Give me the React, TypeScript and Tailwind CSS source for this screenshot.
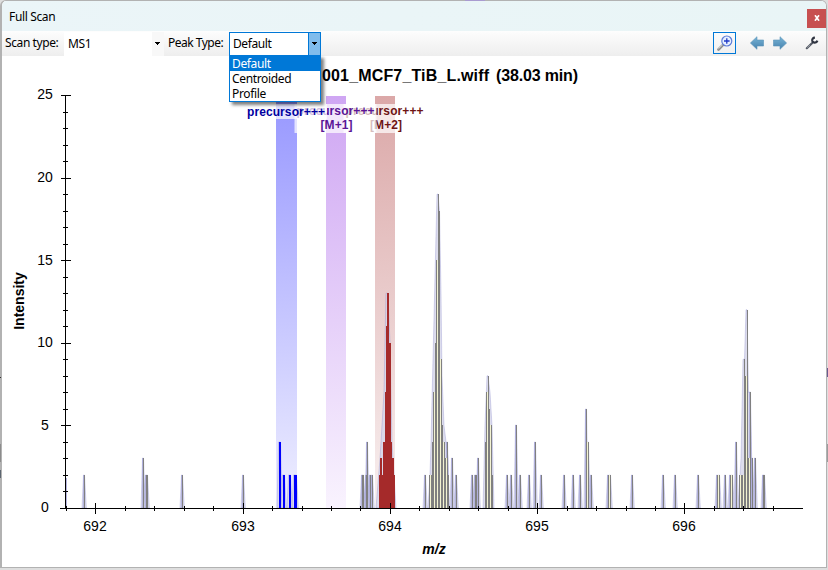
/**
 * FullScanWindow - spectrum viewer with scan and peak type selection
 */

import { useState } from 'react'

type Stick = [x: number, intensity: number, width?: number]

const BASE_Y = 508
const UNIT = 16.52

// Isolated peaks, drawn with a small profile outline behind them
const PEAKS: Stick[] = [
  [84, 2], [143, 3], [146, 2, 2], [182, 2], [243, 2],
  [362, 2, 2], [366, 2, 2], [367, 4], [370, 2], [372, 2],
  [425, 2], [447, 4], [452, 3], [456, 2],
  [472, 2], [475, 2, 2], [478, 3],
  [507, 2], [511, 2], [516, 5], [520, 2], [529, 2], [535, 4], [541, 2],
  [564, 2], [573, 2], [580, 2], [586, 6], [588, 4], [591, 2],
  [608, 2], [610, 2], [632, 2], [663, 2], [675, 2],
  [698, 2], [717, 2], [719, 2], [725, 2], [730, 2], [732, 2], [736, 4],
  [750, 7], [752, 3], [755, 3], [763, 2, 2],
]

// Dense groups, one column per pixel
const DENSE: Stick[] = [
  [429, 2], [431, 2], [432, 4], [433, 7], [435, 10], [436, 15], [438, 19],
  [439, 18], [441, 9], [442, 5], [444, 4], [445, 3], [447, 4], [448, 2],
  [485, 4], [486, 7], [488, 8], [489, 6], [491, 5], [492, 2],
  [739, 2], [741, 2], [742, 2], [744, 9], [745, 8], [747, 12], [748, 3], [750, 7],
]

const CREAM: Stick[] = [
  [430, 2], [434, 7], [437, 15], [440, 9], [443, 4], [446, 3],
  [487, 7], [490, 5], [587, 4], [609, 2], [718, 2], [731, 2], [740, 2], [743, 2], [746, 8], [749, 3],
]

const BLUE: Stick[] = [[279, 4, 2], [283, 2, 2], [289, 2, 2], [294, 2, 3]]

const RED: Stick[] = [
  [379, 2, 16], [380, 3, 2], [383, 4, 9], [385, 7, 6], [386, 11, 3],
  [387, 13, 2], [388, 10, 3], [391, 4], [392, 3, 2],
]

const ENVELOPES: [number, number][][] = [
  [[428, 0], [430, 2], [431, 4], [433, 9], [435, 14], [437, 19], [438, 19], [439.5, 18], [441, 13], [442, 8], [444, 5], [446, 4], [448, 3], [449, 0]],
  [[483, 0], [485, 5], [487, 8], [488, 8], [490, 7], [492, 5], [494, 0]],
  [[738, 0], [741, 3], [743, 9], [744.5, 9], [746, 12], [747, 12], [748.5, 7], [750, 7], [753, 0]],
  [[376, 0], [380, 3], [384, 7], [386, 13], [388, 13], [390, 10], [392, 4], [396, 0]],
]

const BANDS = [
  { x: 276, width: 21, fill: 'url(#band-blue)' },
  { x: 326, width: 20, fill: 'url(#band-violet)' },
  { x: 375, width: 20, fill: 'url(#band-red)' },
]

// Later entries overlay the earlier ones
const LABELS = [
  { cx: 384.5, color: '#6e1414', isotope: '[M+2]', isotopeX: 386 },
  { cx: 335.5, color: '#5a1496', isotope: '[M+1]', isotopeX: 336.5 },
  { cx: 286, color: '#0000a0' },
]

const X_MAJOR = [95, 243, 390, 537, 684]
const X_LABELS = ['692', '693', '694', '695', '696']
const X_MINOR = [66, 125, 154, 184, 213, 272, 302, 331, 360, 419, 449, 478, 508, 567, 596, 626, 655, 714, 743, 773]

function Sticks({ data, fill }: { data: Stick[]; fill: string }) {
  return (
    <g fill={fill} shapeRendering="crispEdges">
      {data.map(([x, v, w = 1], i) => (
        <rect key={i} x={x} y={Math.round(BASE_Y - v * UNIT)} width={w} height={Math.round(v * UNIT)} />
      ))}
    </g>
  )
}

function Gradient({ id, from, to }: { id: string; from: string; to: string }) {
  return (
    <linearGradient id={id} x1="0" y1="0" x2="0" y2="1">
      <stop offset="0" stopColor={from} />
      <stop offset="1" stopColor={to} />
    </linearGradient>
  )
}

function SpectrumChart() {
  return (
    <svg
      width="824"
      height="511"
      viewBox="2 56 824 511"
      className="block font-['Liberation_Sans',Arial,sans-serif]"
    >
      <defs>
        <Gradient id="band-blue" from="#9797ff" to="#efefff" />
        <Gradient id="band-violet" from="#cfa6f3" to="#f9f3fe" />
        <Gradient id="band-red" from="#dba8a8" to="#f8f0f0" />
      </defs>

      {BANDS.map((b) => (
        <rect key={b.x} x={b.x} y={96} width={b.width} height={412} fill={b.fill} />
      ))}

      {/* Profile outlines */}
      <g fill="#d5d5e9" fillOpacity="0.8" stroke="#8585c8" strokeOpacity="0.4" strokeWidth="0.8">
        {[...PEAKS, ...BLUE].map(([x, v, w = 1]) => {
          const top = Math.round(BASE_Y - v * UNIT)
          return <path key={x} d={`M${x - 2} 508L${x - 0.5} ${top}H${x + w - 0.5}L${x + w + 1.3} 508z`} />
        })}
        {ENVELOPES.map((pts, i) => (
          <polygon key={i} points={pts.map(([x, v]) => `${x},${BASE_Y - v * UNIT}`).join(' ')} />
        ))}
      </g>
      <rect x="66" y="478" width="1" height="30" fill="#b4b4df" />

      <g opacity="0.6">
        <Sticks data={PEAKS.map(([x, v]): Stick => [x - 1, v])} fill="#9c9cd4" />
      </g>
      <Sticks data={PEAKS} fill="#808080" />
      <Sticks data={CREAM} fill="#f3f3d2" />
      <Sticks data={DENSE} fill="#808080" />
      <Sticks data={BLUE} fill="#0000ff" />
      <Sticks data={RED} fill="#a52a2a" />

      {/* Axes */}
      <g fill="#000" shapeRendering="crispEdges">
        <rect x="65" y="95" width="1" height="414" />
        <rect x="60" y="508" width="743" height="1" />
        {Array.from({ length: 26 }, (_, i) => {
          const major = i % 5 === 0
          return (
            <rect key={i} x={major ? 61 : 63} y={Math.round(BASE_Y - i * UNIT)} width={major ? 10 : 5} height="1" />
          )
        })}
        {X_MAJOR.map((x) => <rect key={x} x={x} y="503" width="1" height="11" />)}
        {X_MINOR.map((x) => <rect key={x} x={x} y="506" width="1" height="5" />)}
      </g>
      <g fontSize="14" textAnchor="middle">
        {[0, 5, 10, 15, 20, 25].map((v) => (
          <text key={v} x="45" y={Math.round(BASE_Y - v * UNIT + 4.4)}>{v}</text>
        ))}
        {X_LABELS.map((label, i) => (
          <text key={label} x={X_MAJOR[i]} y="531">{label}</text>
        ))}
        <text x="434" y="554" fontWeight="bold" fontStyle="italic">m/z</text>
        <text transform="translate(24 301) rotate(-90)" fontWeight="bold">Intensity</text>
      </g>

      {LABELS.map(({ cx, color, isotope, isotopeX }) => (
        <g key={cx} fontSize="12" fontWeight="bold" textAnchor="middle" fill={color}>
          <rect x={cx - 41} y="104" width="82" height={isotope ? 29 : 15} fill="#fff" fillOpacity="0.72" />
          <text x={cx} y={isotope ? 115 : 116} textLength="78">precursor+++</text>
          {isotope && <text x={isotopeX} y="129" textLength="32">{isotope}</text>}
        </g>
      ))}

      <g fontSize="16" fontWeight="bold">
        <text x="322" y="81" textLength="167">001_MCF7_TiB_L.wiff</text>
        <text x="496" y="81" textLength="82">(38.03 min)</text>
      </g>
    </svg>
  )
}

function Caret() {
  return (
    <svg width="5" height="3" viewBox="0 0 5 3" shapeRendering="crispEdges">
      <path d="M0 0h5v1h-1v1h-1v1h-1v-1h-1v-1h-1z" />
    </svg>
  )
}

function NavArrow({ flip = false }: { flip?: boolean }) {
  return (
    <svg width="14" height="14" viewBox="0 0 14 14" className={flip ? '-scale-x-100' : ''}>
      <defs>
        <Gradient id="nav-arrow" from="#78b4d6" to="#4682ae" />
      </defs>
      <path d="M.4 7L7 .7V4h6.6v6H7v3.3z" fill="url(#nav-arrow)" stroke="#5b93b9" strokeWidth=".6" />
    </svg>
  )
}

const PEAK_TYPES = ['Default', 'Centroided', 'Profile']

export default function App() {
  const [peakType, setPeakType] = useState('Default')
  const [open, setOpen] = useState(true)

  return (
    <div className="relative w-[828px] h-[570px] bg-[#dedede] overflow-hidden font-['Noto_Sans','Open_Sans',sans-serif] text-xs text-black">
      <div className="w-[827px] h-[568px] flex flex-col rounded-t-md border-t border-l-2 border-r border-b border-[#b2b2b2] bg-white overflow-hidden">
        {/* Title bar */}
        <div className="h-[30px] shrink-0 flex items-center justify-between pl-[7px] bg-linear-to-r from-[#ebf5f8] to-[#e9f5f6]">
          <span className="pt-px tracking-[-0.35px]">Full Scan</span>
          <button className="w-[19px] h-[19px] mt-1 bg-[#c75050] flex items-center justify-center">
            <svg width="6" height="6" viewBox="0 0 6 6" stroke="#fff" strokeWidth="1.7">
              <path d="M1 .3L5 5.7M5 .3L1 5.7" />
            </svg>
          </button>
        </div>

        {/* Toolbar */}
        <div className="h-[25px] pt-px shrink-0 flex items-center bg-linear-to-b from-[#fdfdfd] to-[#eeeeee]">
          <span className="w-[62px] pl-[3px] pb-0.5 whitespace-nowrap tracking-[-0.4px]">Scan type:</span>
          <div className="w-[100px] h-6 flex bg-white">
            <span className="flex-1 pl-1 leading-6 tracking-[-0.4px]">MS1</span>
            <span className="w-3 pr-px pb-px flex items-center justify-center bg-[#f8f8f8]"><Caret /></span>
          </div>
          <span className="w-[63px] pl-1 pb-0.5 mr-0.5 whitespace-nowrap tracking-[-0.5px]">Peak Type:</span>
          <div className="relative w-[92px] h-6">
            <button
              onClick={() => setOpen(!open)}
              className="w-full h-6 flex border border-[#0078d7] bg-white text-left"
            >
              <span className="flex-1 pl-[3px] leading-[22px] tracking-[-0.4px]">{peakType}</span>
              <span className="w-3 h-full pb-px flex items-center justify-center border-l border-[#0078d7] bg-[#80bcec]"><Caret /></span>
            </button>
            {open && (
              <ul className="absolute z-10 top-[23px] left-0 w-[92px] border border-[#0078d7] bg-white shadow-[3px_3px_3px_rgba(0,0,0,0.5)]">
                {PEAK_TYPES.map((type) => (
                  <li
                    key={type}
                    onClick={() => {
                      setPeakType(type)
                      setOpen(false)
                    }}
                    className={`h-[15px] pl-[2px] leading-[15px] tracking-[-0.35px] ${
                      type === peakType ? 'bg-[#0078d7] text-white' : ''
                    }`}
                  >
                    {type}
                  </li>
                ))}
              </ul>
            )}
          </div>

          <div className="ml-auto flex items-center pr-[7px] pb-0.5">
            <button className="w-[23px] h-[22px] mr-[14px] flex items-center justify-center border border-[#0078d7]">
              <svg width="16" height="16" viewBox="0 0 16 16" fill="none">
                <path d="M6.3 9.7L1.5 14.5" stroke="#8d8d8d" strokeWidth="2.6" strokeLinecap="round" />
                <path d="M5.6 9.7L1.4 13.8" stroke="#d8d8d8" strokeWidth="1" />
                <circle cx="9.8" cy="6" r="5" fill="#e6f0ff" stroke="#5f7cd8" strokeWidth="1.2" />
                <path d="M9.8 3.2v5.6M7 6h5.6" stroke="#2038c8" strokeWidth="1.3" />
              </svg>
            </button>
            <button className="mr-[9px]"><NavArrow /></button>
            <button className="mr-[18px]"><NavArrow flip /></button>
            <button>
              <svg width="14" height="14" viewBox="0 0 14 14" fill="none">
                <path d="M1.8 12.2L8 6.2" stroke="#555b66" strokeWidth="2.2" strokeLinecap="round" />
                <path d="M9.9 1.6C8 1.6 6.9 3.2 7.3 5C7.9 7.3 11.6 7.2 12.4 4.6" stroke="#2f3440" strokeWidth="2.2" />
                <path d="M2.2 11.7L5 9" stroke="#a4a8b0" strokeWidth=".8" />
              </svg>
            </button>
          </div>
        </div>

        <SpectrumChart />
      </div>

      {/* Parent window showing past the frame */}
      <span className="absolute top-0 left-[465px] w-5 h-px bg-[#a99bd0]" />
      <span className="absolute top-[377px] left-0 w-px h-px bg-[#333]" />
      <span className="absolute top-[444px] left-0 w-px h-[18px] bg-[#8c8c8c]" />
      <span className="absolute top-[470px] left-0 w-px h-2 bg-[#5d6670]" />
      <span className="absolute top-[368px] left-[827px] w-px h-[9px] bg-[#6a5a90]" />
      <span className="absolute top-[444px] left-[827px] w-px h-[18px] bg-[#9c9c9c]" />
    </div>
  )
}
